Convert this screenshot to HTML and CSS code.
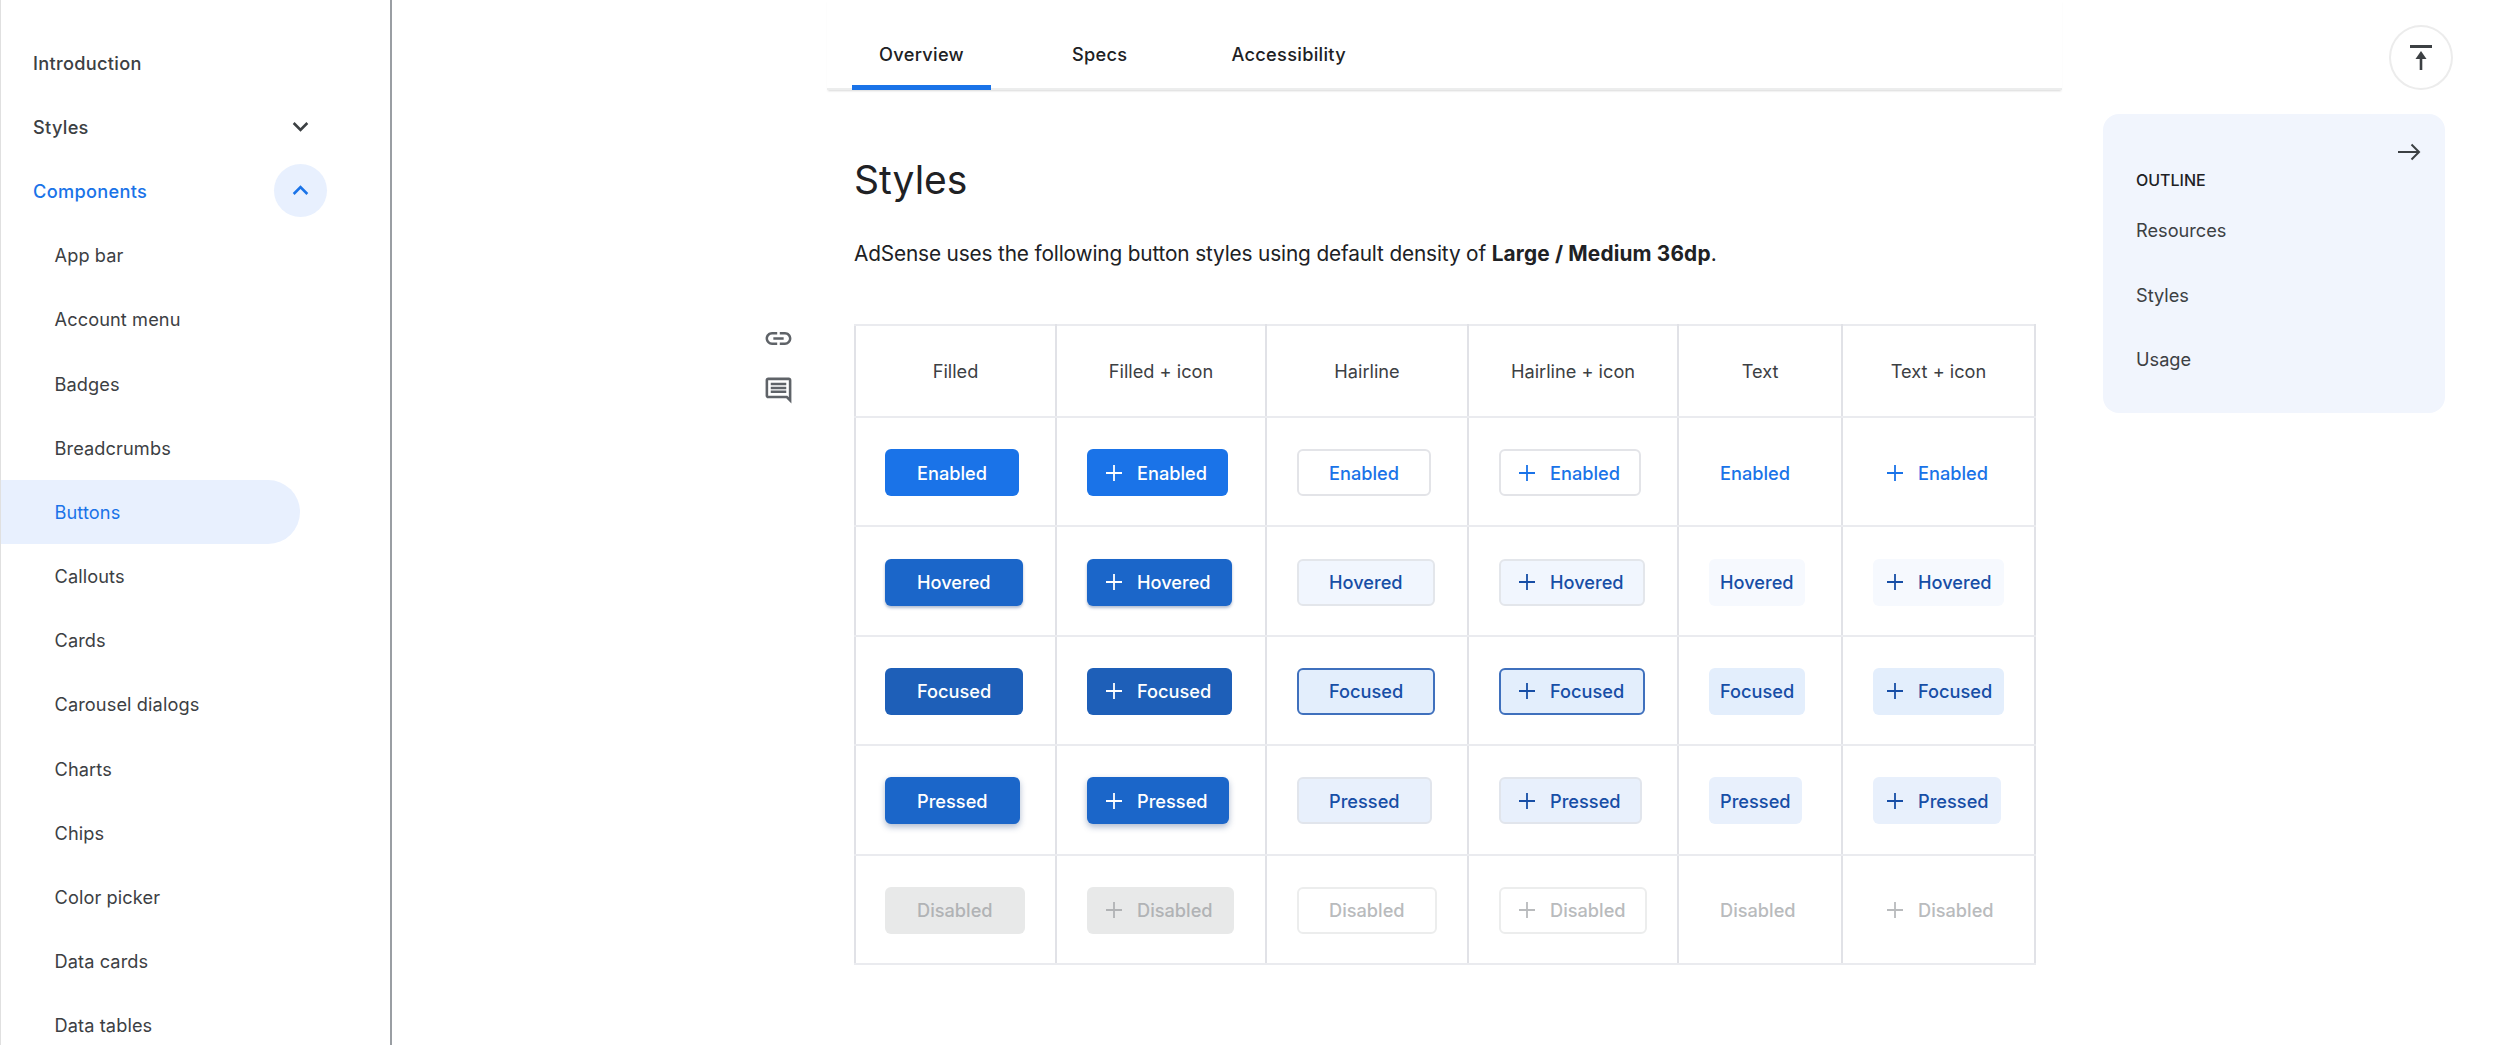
FILE: index.html
```html
<!DOCTYPE html>
<html lang="en">
<head>
<meta charset="utf-8">
<title>Buttons</title>
<link rel="stylesheet" href="styles.css">
</head>
<body>
<svg class="defs" width="0" height="0" aria-hidden="true">
  <symbol id="plus" viewBox="0 0 16 16"><path d="M8 0v16M0 8h16" fill="none" stroke="currentColor" stroke-width="1.8"/></symbol>
</svg>
<aside class="sidenav">
  <ul class="navlist">
    <li class="navitem top">Introduction</li>
    <li class="navitem top">Styles
      <svg class="chev" viewBox="0 0 24 24"><path d="M16.59 8.59L12 13.17 7.41 8.59 6 10l6 6 6-6z"/></svg>
    </li>
    <li class="navitem top active-parent">Components
      <span class="chev-circle"><svg class="chev" viewBox="0 0 24 24"><path d="M12 8l-6 6 1.41 1.41L12 10.83l4.59 4.58L18 14z"/></svg></span>
    </li>
    <li class="navitem">App bar</li>
    <li class="navitem">Account menu</li>
    <li class="navitem">Badges</li>
    <li class="navitem">Breadcrumbs</li>
    <li class="navitem current">Buttons</li>
    <li class="navitem">Callouts</li>
    <li class="navitem">Cards</li>
    <li class="navitem">Carousel dialogs</li>
    <li class="navitem">Charts</li>
    <li class="navitem">Chips</li>
    <li class="navitem">Color picker</li>
    <li class="navitem">Data cards</li>
    <li class="navitem">Data tables</li>
  </ul>
</aside>
<main class="page">
  <div class="actions">
    <svg class="action" viewBox="0 0 24 24"><path d="M3.9 12c0-1.71 1.39-3.1 3.1-3.1h4V7H7c-2.76 0-5 2.24-5 5s2.24 5 5 5h4v-1.9H7c-1.71 0-3.1-1.39-3.1-3.1zM8 13h8v-2H8v2zm9-6h-4v1.9h4c1.71 0 3.1 1.39 3.1 3.1s-1.39 3.1-3.1 3.1h-4V17h4c2.76 0 5-2.24 5-5s-2.24-5-5-5z"/></svg>
    <svg class="action" viewBox="0 0 24 24"><path d="M21.99 4c0-1.1-.89-2-1.99-2H4c-1.1 0-2 .9-2 2v12c0 1.1.9 2 2 2h14l4 4-.01-18zM20 4v13.17L18.83 16H4V4h16zM6 12h12v2H6zm0-3h12v2H6zm0-3h12v2H6z"/></svg>
  </div>
  <div class="content">
    <nav class="tabs">
      <span class="tab tab-overview">Overview</span>
      <span class="tab tab-specs">Specs</span>
      <span class="tab tab-a11y">Accessibility</span>
    </nav>
    <article class="article">
      <h1 class="title">Styles</h1>
      <p class="lead">AdSense uses the following button styles using default density of <strong>Large / Medium 36dp</strong>.</p>
      <table class="grid">
        <colgroup><col class="c1"><col class="c2"><col class="c3"><col class="c4"><col class="c5"><col class="c6"></colgroup>
        <thead>
          <tr><th>Filled</th><th>Filled + icon</th><th>Hairline</th><th>Hairline + icon</th><th>Text</th><th>Text + icon</th></tr>
        </thead>
        <tbody>
          <tr class="enabled">
            <td><span class="btn filled">Enabled</span></td>
            <td><span class="btn filled icon"><svg class="plus"><use href="#plus"/></svg>Enabled</span></td>
            <td><span class="btn hairline">Enabled</span></td>
            <td><span class="btn hairline icon"><svg class="plus"><use href="#plus"/></svg>Enabled</span></td>
            <td><span class="btn text">Enabled</span></td>
            <td><span class="btn text icon"><svg class="plus"><use href="#plus"/></svg>Enabled</span></td>
          </tr>
          <tr class="hovered">
            <td><span class="btn filled">Hovered</span></td>
            <td><span class="btn filled icon"><svg class="plus"><use href="#plus"/></svg>Hovered</span></td>
            <td><span class="btn hairline">Hovered</span></td>
            <td><span class="btn hairline icon"><svg class="plus"><use href="#plus"/></svg>Hovered</span></td>
            <td><span class="btn text">Hovered</span></td>
            <td><span class="btn text icon"><svg class="plus"><use href="#plus"/></svg>Hovered</span></td>
          </tr>
          <tr class="focused">
            <td><span class="btn filled">Focused</span></td>
            <td><span class="btn filled icon"><svg class="plus"><use href="#plus"/></svg>Focused</span></td>
            <td><span class="btn hairline">Focused</span></td>
            <td><span class="btn hairline icon"><svg class="plus"><use href="#plus"/></svg>Focused</span></td>
            <td><span class="btn text">Focused</span></td>
            <td><span class="btn text icon"><svg class="plus"><use href="#plus"/></svg>Focused</span></td>
          </tr>
          <tr class="pressed">
            <td><span class="btn filled">Pressed</span></td>
            <td><span class="btn filled icon"><svg class="plus"><use href="#plus"/></svg>Pressed</span></td>
            <td><span class="btn hairline">Pressed</span></td>
            <td><span class="btn hairline icon"><svg class="plus"><use href="#plus"/></svg>Pressed</span></td>
            <td><span class="btn text">Pressed</span></td>
            <td><span class="btn text icon"><svg class="plus"><use href="#plus"/></svg>Pressed</span></td>
          </tr>
          <tr class="disabled">
            <td><span class="btn filled">Disabled</span></td>
            <td><span class="btn filled icon"><svg class="plus"><use href="#plus"/></svg>Disabled</span></td>
            <td><span class="btn hairline">Disabled</span></td>
            <td><span class="btn hairline icon"><svg class="plus"><use href="#plus"/></svg>Disabled</span></td>
            <td><span class="btn text">Disabled</span></td>
            <td><span class="btn text icon"><svg class="plus"><use href="#plus"/></svg>Disabled</span></td>
          </tr>
        </tbody>
      </table>
    </article>
  </div>
  <div class="rail">
    <div class="totop">
      <svg class="totop-icon" viewBox="0 0 24 26"><path d="M1 0h22v3H1z"/><path d="M12 6l5.500 8h-4.200v11h-2.600V14H6.500z"/></svg>
    </div>
    <section class="outline">
      <svg class="outline-arrow" viewBox="0 0 24 18"><path d="M1 9h21M14.500 1.500L22 9l-7.500 7.500" fill="none" stroke="currentColor" stroke-width="2"/></svg>
      <h2 class="outline-title">OUTLINE</h2>
      <ul class="outline-list">
        <li>Resources</li>
        <li>Styles</li>
        <li>Usage</li>
      </ul>
    </section>
  </div>
</main>
</body>
</html>
```
FILE: styles.css
```css
* { box-sizing: border-box; }
html, body { margin: 0; padding: 0; }
body {
  width: 2500px;
  height: 1045px;
  overflow: hidden;
  display: flex;
  background: #fff;
  color: #3c4043;
  font-family: Inter, Roboto, "Liberation Sans", sans-serif;
  font-size: 18.2px;
}
.defs { position: absolute; }
ul { list-style: none; margin: 0; padding: 0; }

.sidenav {
  flex: none;
  width: 392px;
  height: 1045px;
  overflow: hidden;
  border-left: 1px solid #e0e0e0;
  border-right: 2px solid #9a9ea3;
  padding-top: 30.5px;
}
.navitem {
  height: 64.2px;
  display: flex;
  align-items: center;
  padding-left: 53.5px;
  padding-right: 90px;
  justify-content: space-between;
  letter-spacing: 0.1px;
  color: #3c4043;
}
.navitem.top { padding-left: 32px; font-weight: 450; letter-spacing: 0.3px; }
.navitem.active-parent { color: #1a73e8; }
.navitem.current {
  width: 299px;
  color: #1a73e8;
  background: #e8f0fe;
  border-radius: 0 32px 32px 0;
}
.chev { width: 31px; height: 31px; fill: #3c4043; flex: none; margin-right: -15.5px; display: block; }
.chev-circle {
  flex: none;
  width: 53px;
  height: 53px;
  margin-right: -26.5px;
  border-radius: 50%;
  background: #e8f0fe;
  display: flex;
  align-items: center;
  justify-content: center;
}
.chev-circle .chev { fill: #1a73e8; margin: 0; }

.page { flex: 1; display: flex; align-items: flex-start; padding-left: 371px; }
.actions {
  flex: none;
  width: 64px;
  padding-top: 323px;
  display: flex;
  flex-direction: column;
  gap: 21px;
}
.action { width: 31px; height: 31px; fill: #5f6368; display: block; }

.content { flex: none; width: 1235px; }
.tabs {
  height: 90px;
  display: flex;
  box-shadow: 0 2px 2px -1px #d8d8d8;
  border-bottom: 2px solid #eceded;
  font-weight: 450;
  letter-spacing: 0.3px;
  color: #202124;
}
.tab { padding-top: 42px; line-height: 24px; height: 90px; }
.tab-overview {
  margin-left: 25px;
  width: 139px;
  text-align: center;
  border-bottom: 5px solid #1a73e8;
  border-radius: 3px 3px 0 0;
}
.tab-specs { margin-left: 81px; }
.tab-a11y { margin-left: 104px; }

.article { padding-left: 27px; }
.title {
  margin: 0;
  padding-top: 58px;
  font-size: 39px;
  line-height: 64px;
  font-weight: 400;
  color: #202124;
}
.lead {
  margin: 0;
  padding-top: 24px;
  font-size: 20.8px;
  line-height: 36px;
  letter-spacing: -0.15px;
  color: #202124;
}
.lead strong { font-weight: 700; letter-spacing: 0.17px; }

.grid {
  margin-top: 52px;
  width: 1180px;
  table-layout: fixed;
  border-collapse: collapse;
}
.c1 { width: 201px; }
.c2 { width: 210px; }
.c3 { width: 202px; }
.c4 { width: 210px; }
.c5 { width: 164px; }
.c6 { width: 193px; }
.grid th, .grid td {
  border-width: 2px;
  border-style: solid;
  border-color: #eaebef #e1e2e7;
  padding: 0;
}
.grid th {
  height: 92px;
  text-align: center;
  font-weight: 400;
  color: #3c4043;
}
.grid td { height: 109.4px; padding: 2px 0 0 30px; }
.grid td:first-child { padding-left: 29px; }

.btn {
  height: 47px;
  display: inline-flex;
  align-items: center;
  vertical-align: middle;
  padding: 0 30px;
  border-radius: 6px;
  border: 2px solid transparent;
  font-weight: 500;
  white-space: nowrap;
}
.btn.icon { padding-left: 17px; padding-right: 19px; }
.btn.hairline.icon { padding-left: 18px; }
.btn.text { padding-left: 9px; padding-right: 9px; }
.btn.text.icon { padding-left: 12px; padding-right: 10px; }
.plus { width: 16px; height: 16px; margin-right: 15px; flex: none; }

.filled { color: #fff; }
.hairline, .text { color: #1a73e8; }
.enabled .filled { background: #1a73e8; }
.enabled .hairline { border-color: #e3e4e8; }
.hovered .filled { background: #1b66c9; box-shadow: 0 2px 3px rgba(26, 60, 120, .35); }
.hovered .hairline, .hovered .text { color: #174ea6; }
.hovered .hairline { background: #f1f6fe; border-color: #e3e6eb; }
.hovered .text { background: #f6f9fe; }
.focused .filled { background: #1e5fb8; }
.focused .hairline, .focused .text { color: #174ea6; background: #e3eefc; }
.focused .hairline { border-color: #3f70bd; }
.pressed .filled { background: #1b66c9; box-shadow: 0 3px 6px rgba(26, 60, 120, .35); }
.pressed .hairline, .pressed .text { color: #174ea6; background: #e8f0fc; }
.pressed .hairline { border-color: #e1e5ec; }
.disabled .filled { background: #e8e9e9; color: #b1b3b5; }
.disabled .hairline { border-color: #eceded; color: #b9bbbd; }
.disabled .text { color: #b9bbbd; }

.rail {
  flex: none;
  margin-left: 41px;
  width: 350px;
  display: flex;
  flex-direction: column;
  padding-top: 25px;
}
.totop {
  align-self: flex-end;
  width: 64px;
  height: 65px;
  border-radius: 50%;
  border: 2px solid #ececec;
  display: flex;
  align-items: center;
  justify-content: center;
  background: #fff;
}
.totop-icon { width: 24px; height: 26px; fill: #3c4043; display: block; }
.outline {
  margin-top: 24px;
  width: 342px;
  height: 299px;
  border-radius: 16px;
  background: #f1f5fd;
  padding: 29px 24px 0 33px;
  display: flex;
  flex-direction: column;
}
.outline-arrow { align-self: flex-end; width: 24px; height: 18px; color: #3c4043; display: block; }
.outline-title {
  margin: 7px 0 0;
  font-size: 16px;
  line-height: 24px;
  font-weight: 500;
  color: #202124;
}
.outline-list { margin-top: 6px; color: #3c4043; }
.outline-list li { height: 64.5px; display: flex; align-items: center; }
```
